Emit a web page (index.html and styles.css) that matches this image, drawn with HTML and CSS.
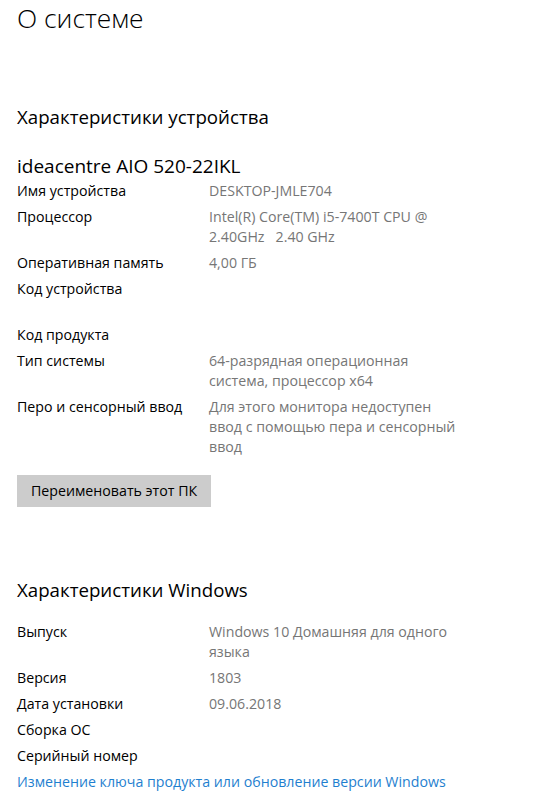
FILE: index.html
```html
<!DOCTYPE html>
<html lang="ru">
<head>
  <meta charset="UTF-8">
  <meta name="viewport" content="width=device-width, initial-scale=1.0">
  <title>О системе</title>
  <link rel="stylesheet" href="styles.css">
</head>
<body>
  <main class="about">
    <h1 class="page-title">О системе</h1>

    <!-- Device specs -->
    <section class="specs specs-device">
      <h2 class="specs-title">Характеристики устройства</h2>
      <div class="model-name">ideacentre AIO 520-22IKL</div>
      <dl class="spec-list">
        <div class="spec-row"><dt>Имя устройства</dt><dd>DESKTOP-JMLE704</dd></div>
        <div class="spec-row"><dt>Процессор</dt><dd>Intel(R) Core(TM) i5-7400T CPU @ 2.40GHz&nbsp;&nbsp; 2.40 GHz</dd></div>
        <div class="spec-row"><dt>Оперативная память</dt><dd>4,00 ГБ</dd></div>
        <div class="spec-row spec-row-tall"><dt>Код устройства</dt><dd></dd></div>
        <div class="spec-row"><dt>Код продукта</dt><dd></dd></div>
        <div class="spec-row"><dt>Тип системы</dt><dd>64-разрядная операционная система, процессор x64</dd></div>
        <div class="spec-row"><dt>Перо и сенсорный ввод</dt><dd>Для этого монитора недоступен ввод с помощью пера и сенсорный ввод</dd></div>
      </dl>
      <button class="rename-btn" type="button">Переименовать этот ПК</button>
    </section>

    <!-- Windows specs -->
    <section class="specs specs-windows">
      <h2 class="specs-title">Характеристики Windows</h2>
      <dl class="spec-list">
        <div class="spec-row"><dt>Выпуск</dt><dd>Windows 10 Домашняя для одного языка</dd></div>
        <div class="spec-row"><dt>Версия</dt><dd>1803</dd></div>
        <div class="spec-row"><dt>Дата установки</dt><dd>09.06.2018</dd></div>
        <div class="spec-row"><dt>Сборка ОС</dt><dd></dd></div>
        <div class="spec-row"><dt>Серийный номер</dt><dd></dd></div>
      </dl>
      <a class="upgrade-link" href="#">Изменение ключа продукта или обновление версии Windows</a>
    </section>
  </main>
</body>
</html>
```

FILE: styles.css
```css
/* Base reset */
* {
  margin: 0;
  padding: 0;
  box-sizing: border-box;
}
:root {
  --text: #000;
  --text-muted: #767676;
  --button-bg: #cccccc;
  --link: #1f7fcf;
}
body {
  font-family: "Open Sans", "Noto Sans", sans-serif;
  font-size: 14.2px;
  line-height: 20px;
  color: var(--text);
  background: #fff;
}

.about {
  padding: 0 17px;
}
.page-title {
  font-size: 26.4px;
  font-weight: 300;
  line-height: 36px;
}

/* Sections */
.specs-title {
  font-size: 18.7px;
  font-weight: 400;
  line-height: 28px;
}
.specs-device {
  margin-top: 67px;
}
.specs-windows {
  margin-top: 69px;
}
.model-name {
  margin-top: 21px;
  font-size: 19px;
  line-height: 28px;
}
.specs-device .spec-list {
  margin-top: 1px;
}
.specs-windows .spec-list {
  margin-top: 18px;
}

/* Spec rows */
.spec-row {
  display: grid;
  grid-template-columns: 192px 250px;
  margin-bottom: 6px;
}
.spec-row-tall {
  min-height: 40px;
}
.spec-row dd {
  color: var(--text-muted);
}

.rename-btn {
  margin-top: 12px;
  height: 32px;
  padding: 0 14px;
  border: none;
  background: var(--button-bg);
  font: inherit;
  color: var(--text);
}

.upgrade-link {
  color: var(--link);
  text-decoration: none;
}
```
